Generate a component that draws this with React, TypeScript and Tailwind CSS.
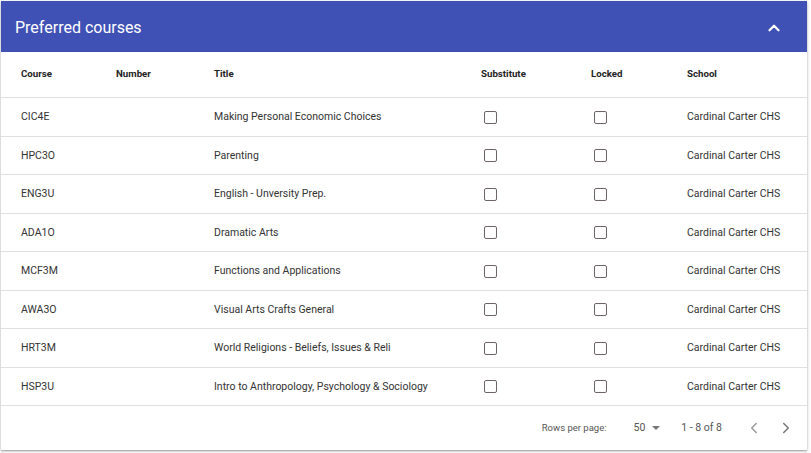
import { ChevronUp, ChevronLeft, ChevronRight } from "lucide-react";

const rows = [
  ["CIC4E", "Making Personal Economic Choices"],
  ["HPC3O", "Parenting"],
  ["ENG3U", "English - Unversity Prep."],
  ["ADA1O", "Dramatic Arts"],
  ["MCF3M", "Functions and Applications"],
  ["AWA3O", "Visual Arts Crafts General"],
  ["HRT3M", "World Religions - Beliefs, Issues & Reli"],
  ["HSP3U", "Intro to Anthropology, Psychology & Sociology"],
];

const cols = "grid grid-cols-[95px_98px_267px_110px_96px_1fr] pl-[20px]";

function Box() {
  return <div className="ml-[3px] w-[13px] h-[13px] rounded-[2px] border-[1.5px] border-[#6e6468]" />;
}

export default function App() {
  return (
    <div className="w-[811px] h-[453px] bg-white pt-[1px] pl-[1px]" style={{ fontFamily: "Roboto, sans-serif" }}>
      <div className="w-[806px] h-[449px] bg-white shadow-[0_1px_3px_rgba(0,0,0,0.3),0_1px_1px_rgba(0,0,0,0.15)] flex flex-col">
        <div className="h-[51px] bg-[#3f51b5] flex items-center justify-between pl-[14px] pr-[24px] pt-[2px]">
          <span className="text-white text-[16px]">Preferred courses</span>
          <ChevronUp size={18} strokeWidth={3} className="text-white" />
        </div>
        <div className={`${cols} h-[46px] items-center border-b border-[#e0e0e0] text-[9.7px] font-bold text-[#222]`}>
          <span>Course</span>
          <span>Number</span>
          <span>Title</span>
          <span>Substitute</span>
          <span>Locked</span>
          <span>School</span>
        </div>
        {rows.map(([c, t]) => (
          <div key={c} className={`${cols} h-[38.5px] items-center border-b border-[#e0e0e0] text-[10.5px] text-[#333] pt-[1px]`}>
            <span>{c}</span>
            <span></span>
            <span>{t}</span>
            <Box />
            <Box />
            <span>Cardinal Carter CHS</span>
          </div>
        ))}
        <div className="flex-1 flex items-center justify-end text-[9.5px] text-[#555] pr-[12px]">
          <span>Rows per page:</span>
          <span className="ml-[27px] text-[10.5px]">50</span>
          <svg width="10" height="10" viewBox="0 0 10 10" className="ml-[6px]"><path d="M1 3h8L5 7z" fill="#777" /></svg>
          <span className="ml-[20px] text-[10.5px]">1 - 8 of 8</span>
          <ChevronLeft size={18} className="ml-[23px] text-[#999]" />
          <ChevronRight size={18} className="ml-[14px] text-[#777]" />
        </div>
      </div>
    </div>
  );
}
